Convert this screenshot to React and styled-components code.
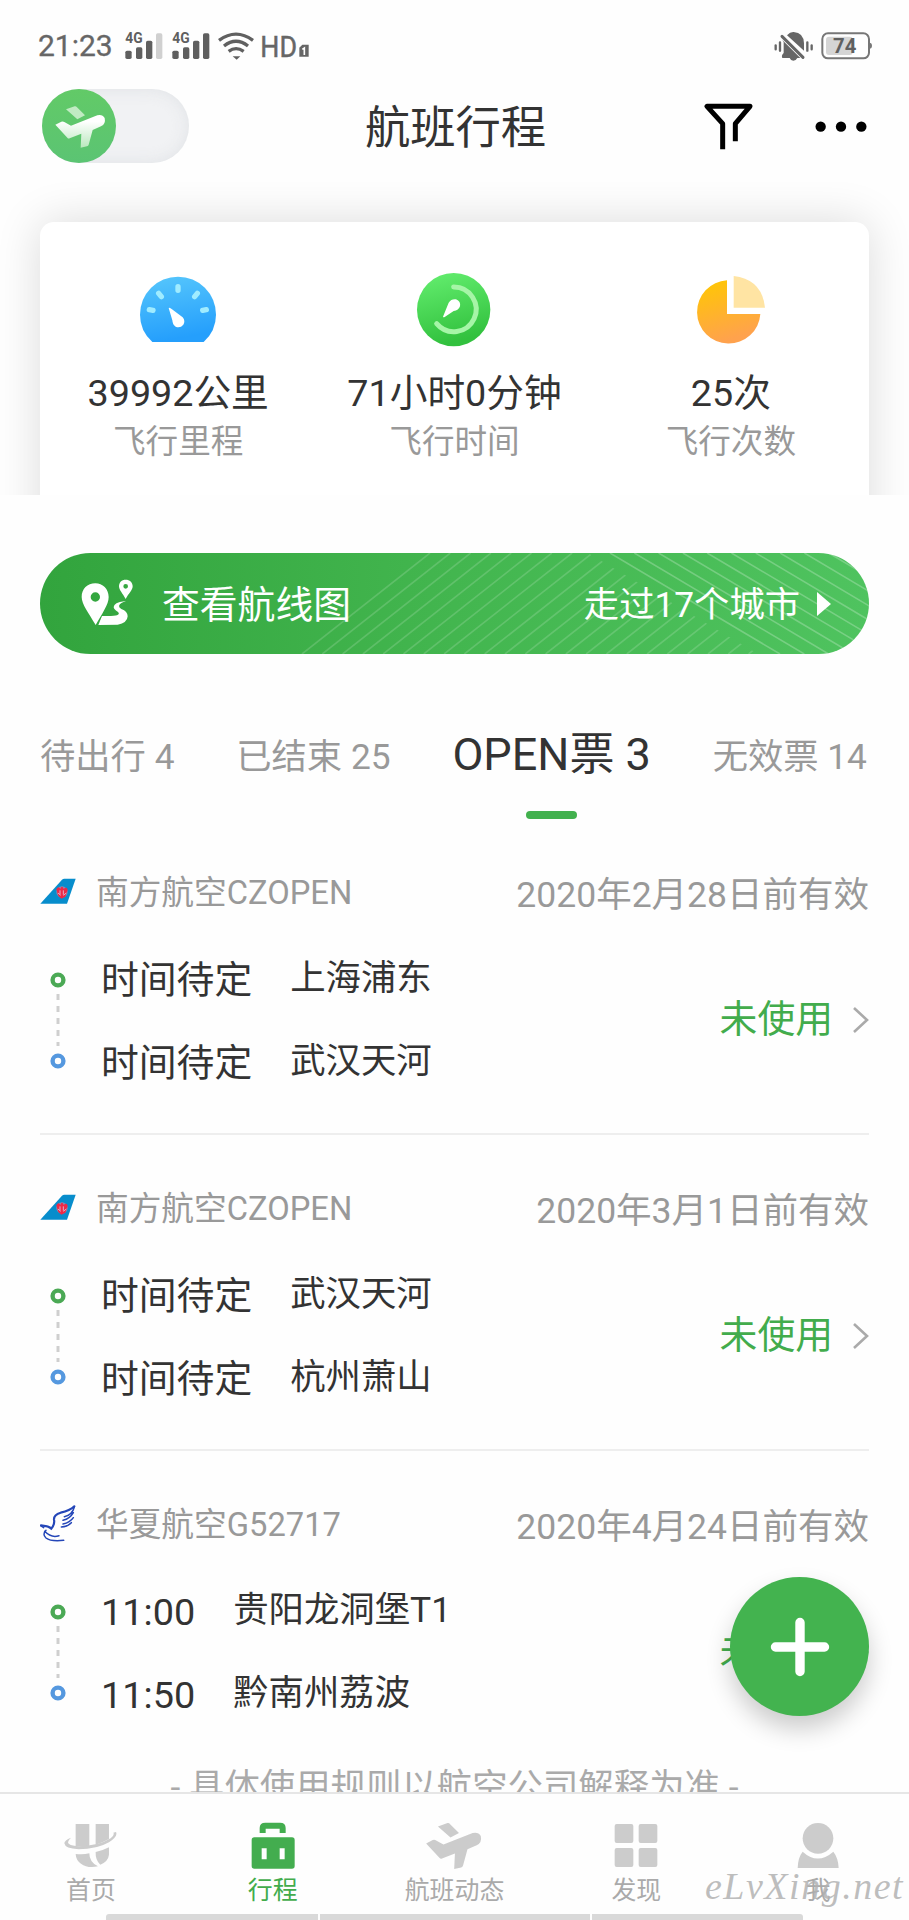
import React from "react";
import styled, { createGlobalStyle } from "styled-components";

const GlobalStyle = createGlobalStyle`
  * { box-sizing: border-box; }
  body { margin: 0; background: #fefefe; }
  svg { display: block; flex: none; }
`;

const Screen = styled.div`
  position: relative;
  width: 909px;
  height: 1920px;
  overflow: hidden;
  display: flex;
  flex-direction: column;
  background: #fefefe;
  color: #333;
  font-family: Roboto, "Noto Sans CJK SC", sans-serif;
  white-space: nowrap;
`;

const StatusBar = styled.div`
  height: 89px;
  padding: 2px 37px 0 38px;
  display: flex;
  align-items: center;
  color: #666;
`;
const Clock = styled.span`
  width: 87px;
  font-size: 30px;
  line-height: 40px;
  -webkit-text-stroke: 0.3px #666;
`;
const Spacer = styled.div`
  flex: 1;
`;
const StatusIcon = styled.svg`
  margin-left: ${(p) => p.$gap || 0}px;
  overflow: visible;
`;

const Header = styled.header`
  height: 93px;
  padding: 0 40px 0 42px;
  display: grid;
  grid-template-columns: 1fr auto 1fr;
  align-items: start;
`;
const Toggle = styled.div`
  width: 147px;
  height: 74px;
  border-radius: 37px;
  background: #f1f2f4;
  box-shadow: inset 0 0 16px rgba(215, 218, 222, 0.65);
`;
const ToggleKnob = styled.div`
  width: 74px;
  height: 74px;
  border-radius: 50%;
  background: linear-gradient(#62ca67, #5bc473);
  padding: 16px 0 0 12px;
`;
const Title = styled.h1`
  margin: 0;
  padding-top: 2px;
  font-size: 45.3px;
  font-weight: 400;
  line-height: 76px;
`;
const HeaderActions = styled.div`
  display: flex;
  justify-content: flex-end;
  align-items: flex-start;
  padding: 14px 2px 0 0;
  gap: 62px;
`;

const Content = styled.main`
  flex: 1;
  min-height: 0;
  overflow: hidden;
`;
const StatsClip = styled.section`
  height: 313px;
  padding: 40px 40px 0;
  overflow: hidden;
`;
const StatsCard = styled.div`
  height: 330px;
  border-radius: 14px;
  background: #fff;
  box-shadow: 0 0 46px rgba(0, 0, 0, 0.14);
  display: grid;
  grid-template-columns: repeat(3, 1fr);
`;
const Stat = styled.div`
  display: flex;
  flex-direction: column;
  align-items: center;
  padding-top: 50px;
`;
const StatValue = styled.div`
  margin-top: 18px;
  font-size: 37.7px;
  line-height: 54px;
`;
const StatLabel = styled.div`
  font-size: 32.6px;
  line-height: 45px;
  color: #999;
`;

const RouteBanner = styled.div`
  position: relative;
  height: 101px;
  margin: 58px 40px 0;
  padding: 0 38px 2px 41px;
  border-radius: 51px;
  overflow: hidden;
  display: flex;
  align-items: center;
  color: #fff;
  background: linear-gradient(90deg, #32a43d, #43b64f 50%, #4fc35f);
`;
const BannerPattern = styled.svg`
  position: absolute;
  inset: 0;
`;
const BannerTitle = styled.span`
  position: relative;
  flex: 1;
  margin-left: 28px;
  padding-top: 4px;
  font-size: 37.8px;
  line-height: 50px;
`;
const BannerMeta = styled.span`
  position: relative;
  padding-top: 4px;
  font-size: 35.3px;
  line-height: 50px;
`;
const Caret = styled.i`
  position: relative;
  margin: 3px 0 0 17px;
  border-left: 14px solid #fff;
  border-top: 12px solid transparent;
  border-bottom: 12px solid transparent;
`;

const Tabs = styled.nav`
  height: 165px;
  padding: 72px 42px 0 40px;
  display: flex;
  justify-content: space-between;
`;
const Tab = styled.div`
  display: flex;
  flex-direction: column;
  align-items: center;
  font-size: ${(p) => (p.$active ? 45 : 35.3)}px;
  line-height: ${(p) => (p.$active ? 57 : 62)}px;
  color: ${(p) => (p.$active ? "#333" : "#999")};
`;
const TabLine = styled.i`
  width: 51px;
  height: 8px;
  margin-top: 28px;
  border-radius: 4px;
  background: #42b14e;
`;

const Trip = styled.article`
  height: 316px;
  margin: 0 40px;
  padding-top: 49px;
  border-bottom: ${(p) => (p.$last ? "none" : "2px solid #eee")};
`;
const TripHead = styled.div`
  height: 52px;
  display: flex;
  align-items: center;
  color: #999;
`;
const LogoBox = styled.div`
  padding-bottom: 5px;
`;
const Airline = styled.span`
  flex: 1;
  margin-left: 19px;
  font-size: 32.7px;
  line-height: 50px;
  padding-bottom: 2px;
`;
const Validity = styled.span`
  font-size: 35.5px;
  line-height: 50px;
  padding-top: 2px;
`;
const TripBody = styled.div`
  display: flex;
  padding-top: 18px;
`;
const Legs = styled.div`
  flex: 1;
  margin-left: 35px;
`;
const Leg = styled.div`
  height: 83px;
  display: flex;
  gap: 38px;
  line-height: 84px;
`;
const LegTime = styled.span`
  font-size: 37.8px;
`;
const LegPlace = styled.span`
  font-size: 35.4px;
  line-height: 81px;
`;
const TripStatus = styled.div`
  height: 164px;
  display: flex;
  align-items: center;
  gap: 19px;
  font-size: 37.8px;
  color: #42ac4c;
`;
const StatusText = styled.span`
  line-height: 50px;
  padding-bottom: 2px;
`;
const Rule = styled.p`
  margin: -10px 0 0;
  font-size: 35.4px;
  line-height: 60px;
  text-align: center;
  color: #aaa;
`;

const AddButton = styled.button`
  position: absolute;
  left: 730px;
  top: 1577px;
  width: 139px;
  height: 139px;
  padding: 0;
  border: 0;
  border-radius: 50%;
  display: grid;
  place-items: center;
  background: #43b34f;
  box-shadow: 0 13px 24px rgba(0, 0, 0, 0.2);
`;

const NavBar = styled.nav`
  height: 122px;
  flex: none;
  border-top: 2px solid #e6e6e6;
  display: grid;
  grid-template-columns: repeat(5, 1fr);
  background: #fefefe;
`;
const NavItem = styled.div`
  display: flex;
  flex-direction: column;
  align-items: center;
  padding-top: 28px;
  color: ${(p) => (p.$active ? "#42ac4c" : "#aaa")};
  font-size: 24.9px;
  line-height: 44px;
`;
const NavIcon = styled.div`
  height: 47px;
`;
const HomeIndicator = styled.div`
  height: 6px;
  width: 697px;
  margin-left: 106px;
  flex: none;
  display: grid;
  grid-template-columns: 212px 270px 211px;
  gap: 2px;
  border-radius: 3px 3px 0 0;
  overflow: hidden;
`;
const IndicatorPart = styled.i`
  background: #d9d9d9;
`;
const Watermark = styled.div`
  position: absolute;
  left: 705px;
  top: 1861px;
  font: italic 38px/50px "Liberation Serif", serif;
  letter-spacing: 1.5px;
  color: rgba(178, 178, 178, 0.85);
`;

const Signal = ({ weak, gap }) => (
  <StatusIcon $gap={gap} width="38" height="28" viewBox="374 94 114 84" fill="#5f5f5f">
    <text x="375" y="128" fontSize="42" fontWeight="700" textLength="52" lengthAdjust="spacingAndGlyphs">4G</text>
    <rect x="375" y="150" width="19" height="25" rx="5" />
    <rect x="407" y="140" width="19" height="35" rx="5" />
    <rect x="437" y="120" width="19" height="55" rx="5" />
    <rect x="467" y="98" width="19" height="77" rx="5" fill={weak ? "#d0d0d0" : "#5f5f5f"} />
  </StatusIcon>
);

const Wifi = () => (
  <StatusIcon $gap={8} width="36" height="28" viewBox="653 94 108 84" fill="none" stroke="#606060" strokeWidth="10">
    <path d="M656 119Q707 82 758 119" />
    <path d="M671 136Q707 108 743 136" />
    <path d="M685 152Q707 136 730 152" />
    <path d="M697 167h23l-11 10z" fill="#606060" stroke="none" />
  </StatusIcon>
);

const HdMark = () => (
  <StatusIcon $gap={7} width="49" height="28" viewBox="782 94 147 84">
    <text x="780" y="168" fontSize="89" fill="#666" stroke="#666" strokeWidth="1.5" textLength="110" lengthAdjust="spacingAndGlyphs">HD</text>
    <path d="M897 141l9-9h19v36h-28z" fill="#666" />
    <path d="M906 146l6-4v21" stroke="#fff" strokeWidth="5" fill="none" />
  </StatusIcon>
);

const MutedBell = () => (
  <StatusIcon width="40" height="30" viewBox="958 91 120 90" fill="#666">
    <path d="M997 104Q1007 93 1017 94Q1047 96 1048 128V150Z" />
    <path d="M983 118L1037 172H1028Q1024 180 1016 180Q1008 180 1005 172H983Q979 165 987 157V125Z" />
    <path d="M982 107L1045 170" stroke="#666" strokeWidth="9" strokeLinecap="round" />
    <g stroke="#666" strokeWidth="7" strokeLinecap="round">
      <path d="M963 134v12M976 125v25M1058 125v25M1071 134v12" />
    </g>
  </StatusIcon>
);

const Battery = () => (
  <StatusIcon $gap={7} width="51" height="28" viewBox="1097 95 153 84">
    <rect x="1101" y="99" width="140" height="75" rx="17" fill="#fff" stroke="#777" strokeWidth="6" />
    <path d="M1242 127q8 0 8 9t-8 9z" fill="#777" />
    <rect x="1112" y="109" width="80" height="55" rx="9" fill="#d5d5d5" />
    <text x="1133" y="158" fontSize="59" fontWeight="700" fill="#606060" textLength="70" lengthAdjust="spacingAndGlyphs">74</text>
  </StatusIcon>
);

const PlaneShape = ({ fill, finFill }) => (
  <>
    <path d="M196 326L222 317Q226 316 229 320L253 344L230 356Z" fill={finFill} />
    <path d="M164 372L182 363Q187 361 191 364L211 375L290 344Q305 340 312 352Q316 370 301 377L276 388L264 432Q263 436 259 437L240 441L242 399L207 413Q203 415 200 411Z" fill={fill} />
  </>
);

const TogglePlane = () => (
  <svg width="52" height="44" viewBox="160 313 156 132">
    <defs>
      <linearGradient id="wing" x2="0" y2="1">
        <stop offset="0.2" stopColor="#fff" />
        <stop offset="1" stopColor="#b9e8bd" />
      </linearGradient>
    </defs>
    <PlaneShape fill="url(#wing)" finFill="#c1ebc3" />
  </svg>
);

const Filter = () => (
  <svg width="49" height="47" viewBox="751 308 147 141" fill="none" stroke="#000" strokeWidth="15">
    <path d="M807 447V370L760 318H889L845 370V423" strokeLinejoin="round" />
  </svg>
);
const More = () => (
  <svg width="52" height="47" viewBox="1081 308 156 141">
    <circle cx="1098" cy="379" r="15.5" />
    <circle cx="1159" cy="379" r="15.5" />
    <circle cx="1220" cy="379" r="15.5" />
  </svg>
);

const Gauge = () => (
  <svg width="78" height="76" viewBox="418 186 234 228">
    <defs>
      <linearGradient id="blue" x2="0.2" y2="1">
        <stop stopColor="#57c7fc" />
        <stop offset="1" stopColor="#259ffc" />
      </linearGradient>
    </defs>
    <path d="M458 396Q421 362 421 314A114 114 0 0 1 649 314Q649 362 612 396Z" fill="url(#blue)" />
    <g stroke="#a0ecff" strokeWidth="16" strokeLinecap="round">
      <path d="M535 230v11M477 250l8 10M593 250l-8 10M449 299l11 2M620 299l-11 2" />
    </g>
    <path d="M507 294Q510 291 517 298L549 322Q558 333 551 344Q542 355 528 350Q519 345 518 331Z" fill="#fff" />
  </svg>
);
const Timer = () => (
  <svg width="78" height="76" viewBox="1248 186 234 228">
    <defs>
      <linearGradient id="green" x2="0.25" y2="1">
        <stop stopColor="#65ef70" />
        <stop offset="1" stopColor="#32c13e" />
      </linearGradient>
    </defs>
    <circle cx="1364" cy="299" r="110" fill="url(#green)" />
    <path d="M1364 231A67 67 0 1 1 1313 341" fill="none" stroke="#a6f5a7" strokeWidth="15" strokeLinecap="round" />
    <path d="M1332 320L1349 278Q1357 266 1371 268Q1386 274 1383 289Q1379 301 1364 303L1337 321Q1333 323 1332 320Z" fill="#fff" />
  </svg>
);
const Pie = () => (
  <svg width="78" height="76" viewBox="712 186 234 228">
    <defs>
      <linearGradient id="amber" x2="0.3" y2="1">
        <stop stopColor="#ffc900" />
        <stop offset="1" stopColor="#ffa24d" />
      </linearGradient>
    </defs>
    <path d="M817 211A95 95 0 1 0 917 312H817Z" fill="url(#amber)" />
    <path d="M837 198Q922 208 931 293H837Z" fill="#ffe4a3" />
  </svg>
);

const RouteIcon = () => (
  <StatusIcon width="53" height="48" viewBox="244 150 159 144" fill="#fff">
    <path fillRule="evenodd" d="M287 163C263 163 246 180 246 204C246 226 267 252 288 288C308 252 327 227 327 204C327 180 309 163 287 163ZM287 190a14 14 0 1 1 0 28a14 14 0 1 1 0-28Z" />
    <path fillRule="evenodd" d="M378 152C366 152 358 160 358 172C358 183 369 193 378 210C387 193 399 184 399 172C399 160 390 152 378 152ZM378 165a7 7 0 1 1 0 14a7 7 0 1 1 0-14Z" />
    <path d="M374 217Q343 221 342 234Q342 241 354 248Q362 254 352 259Q344 262 307 261L296 288L354 287Q383 282 384 262Q384 247 365 240Q356 235 359 228Q362 222 379 217Z" />
  </StatusIcon>
);

const Pattern = () => (
  <BannerPattern width="829" height="101" viewBox="0 0 829 101" stroke="#fff" strokeWidth="1.6">
    <clipPath id="fan">
      <path d="M0 0H548L735 111H0Z" />
    </clipPath>
    <g clipPath="url(#fan)" strokeOpacity="0.16">
      {Array.from({ length: 24 }, (_, k) => (
        <path key={k} d={`M${262 + k * 20.3} 101l128-101`} />
      ))}
    </g>
    <g strokeOpacity="0.24">
      {Array.from({ length: 11 }, (_, k) => (
        <path key={k} d={`M${570 + k * 24.3} 0l170 101`} />
      ))}
    </g>
  </BannerPattern>
);

const SouthernLogo = () => (
  <svg width="37" height="37" viewBox="121 70 111 111">
    <path d="M122 162L187 90Q190 87 194 87H228L202 162Z" fill="#078dcc" />
    <circle cx="187" cy="127" r="17" fill="#9387ad" />
    <path d="M170 119q7-12 12-1q5-13 10 0q10-9 12 3l-7 20-12 6-9-8z" fill="#ef2846" />
    <path d="M181 122v13M191 122v13M175 130l8 7M200 130l-9 7" stroke="#dfafc5" strokeWidth="3" />
  </svg>
);
const ChinaExpressLogo = () => (
  <svg width="37" height="37" viewBox="121 74 111 111" fill="none" stroke="#2446b8" strokeLinecap="round">
    <path d="M124 135Q148 137 155 145Q166 131 163 118Q162 103 183 97Q211 91 224 78" strokeWidth="6.5" />
    <path d="M224 80Q218 104 194 109M221 97Q211 115 190 120M221 112Q211 127 190 131M215 127Q204 139 185 140M123 136L132 142M139 150Q127 162 139 173Q153 184 192 180M135 153Q155 174 178 166" strokeWidth="4.5" />
  </svg>
);

const Track = () => (
  <svg width="26" height="166" viewBox="-18 0 26 166" fill="none">
    <circle cy="42" r="5.4" stroke="#4ba955" strokeWidth="4.4" />
    <path d="M0 56V108" stroke="#cfcfcf" strokeWidth="3" strokeDasharray="6 6" />
    <circle cy="123" r="5.4" stroke="#5598df" strokeWidth="4.4" />
  </svg>
);
const Chevron = () => (
  <svg width="17" height="28" viewBox="0 0 17 28" fill="none" stroke="#aaa" strokeWidth="2.6">
    <path d="M2 2L15 14L2 26" />
  </svg>
);

const HomeIcon = () => (
  <svg width="53.3" height="47" viewBox="190 246 160 141" fill="#ccc">
    <path d="M225 252H266V318Q244 321 225 318Z" />
    <path d="M285 252H325V297Q307 308 285 314Z" />
    <path d="M211 293Q191 301 191 310Q193 326 234 328Q289 328 325 307Q353 288 346 276L338 278Q343 284 330 295Q293 318 235 319Q202 318 202 307Q203 300 211 293Z" />
    <path d="M225 342Q247 345 266 340Q266 367 292 379Q261 386 241 371Q226 361 225 342Z" />
    <path d="M285 336Q306 332 325 322V344Q323 364 299 374Q284 361 285 336Z" />
  </svg>
);
const CaseIcon = () => (
  <svg width="46" height="47" viewBox="748 244 138 141" fill="#43ad4f">
    <path d="M777 277V262Q777 246 794 246H838Q855 246 855 262V277H837V264H795V277Z" />
    <path fillRule="evenodd" d="M761 290H874Q882 290 882 298V376Q882 384 874 384H761Q753 384 753 376V298Q753 290 761 290ZM783 323V356H798V323ZM837 323V356H852V323Z" />
  </svg>
);
const FlightIcon = () => (
  <svg width="58" height="48" viewBox="162 314 155 130">
    <PlaneShape fill="#ccc" finFill="#ccc" />
  </svg>
);
const GridIcon = () => (
  <svg width="44" height="47" viewBox="478 246 132 141" fill="#ccc">
    <rect x="480" y="252" width="56" height="57" rx="6" />
    <rect x="552" y="252" width="56" height="57" rx="6" />
    <rect x="480" y="324" width="56" height="57" rx="6" />
    <rect x="552" y="324" width="56" height="57" rx="6" />
  </svg>
);
const PersonIcon = () => (
  <svg width="42" height="47" viewBox="1027 245 126 141" fill="#ccc">
    <circle cx="1090" cy="294" r="46" />
    <path d="M1029 383Q1030 351 1044 334Q1089 375 1136 334Q1151 353 1152 383Z" />
  </svg>
);

const stats = [
  { icon: Gauge, value: "39992公里", label: "飞行里程" },
  { icon: Timer, value: "71小时0分钟", label: "飞行时间" },
  { icon: Pie, value: "25次", label: "飞行次数" },
];
const tabs = ["待出行 4", "已结束 25", "OPEN票 3", "无效票 14"];
const trips = [
  { logo: SouthernLogo, airline: "南方航空CZOPEN", valid: "2020年2月28日前有效", legs: [["时间待定", "上海浦东"], ["时间待定", "武汉天河"]] },
  { logo: SouthernLogo, airline: "南方航空CZOPEN", valid: "2020年3月1日前有效", legs: [["时间待定", "武汉天河"], ["时间待定", "杭州萧山"]] },
  { logo: ChinaExpressLogo, airline: "华夏航空G52717", valid: "2020年4月24日前有效", legs: [["11:00", "贵阳龙洞堡T1"], ["11:50", "黔南州荔波"]] },
];
const navItems = [
  { icon: HomeIcon, label: "首页" },
  { icon: CaseIcon, label: "行程" },
  { icon: FlightIcon, label: "航班动态" },
  { icon: GridIcon, label: "发现" },
  { icon: PersonIcon, label: "我" },
];

export default function App() {
  return (
    <Screen>
      <GlobalStyle />
      <StatusBar>
        <Clock>21:23</Clock>
        <Signal weak />
        <Signal gap={9} />
        <Wifi />
        <HdMark />
        <Spacer />
        <MutedBell />
        <Battery />
      </StatusBar>
      <Header>
        <Toggle>
          <ToggleKnob>
            <TogglePlane />
          </ToggleKnob>
        </Toggle>
        <Title>航班行程</Title>
        <HeaderActions>
          <Filter />
          <More />
        </HeaderActions>
      </Header>
      <Content>
        <StatsClip>
          <StatsCard>
            {stats.map(({ icon: Icon, value, label }) => (
              <Stat key={label}>
                <Icon />
                <StatValue>{value}</StatValue>
                <StatLabel>{label}</StatLabel>
              </Stat>
            ))}
          </StatsCard>
        </StatsClip>
        <RouteBanner>
          <Pattern />
          <RouteIcon />
          <BannerTitle>查看航线图</BannerTitle>
          <BannerMeta>走过17个城市</BannerMeta>
          <Caret />
        </RouteBanner>
        <Tabs>
          {tabs.map((label, i) => (
            <Tab key={label} $active={i === 2}>
              {label}
              {i === 2 && <TabLine />}
            </Tab>
          ))}
        </Tabs>
        {trips.map(({ logo: Logo, airline, valid, legs }, i) => (
          <Trip key={valid} $last={i === trips.length - 1}>
            <TripHead>
              <LogoBox>
                <Logo />
              </LogoBox>
              <Airline>{airline}</Airline>
              <Validity>{valid}</Validity>
            </TripHead>
            <TripBody>
              <Track />
              <Legs>
                {legs.map(([time, place], n) => (
                  <Leg key={n}>
                    <LegTime>{time}</LegTime>
                    <LegPlace>{place}</LegPlace>
                  </Leg>
                ))}
              </Legs>
              <TripStatus>
                <StatusText>未使用</StatusText>
                <Chevron />
              </TripStatus>
            </TripBody>
          </Trip>
        ))}
        <Rule>- 具体使用规则以航空公司解释为准 -</Rule>
      </Content>
      <NavBar>
        {navItems.map(({ icon: Icon, label }, i) => (
          <NavItem key={label} $active={i === 1}>
            <NavIcon>
              <Icon />
            </NavIcon>
            {label}
          </NavItem>
        ))}
      </NavBar>
      <HomeIndicator>
        <IndicatorPart />
        <IndicatorPart />
        <IndicatorPart />
      </HomeIndicator>
      <AddButton aria-label="添加">
        <svg width="60" height="60" viewBox="0 0 60 60" stroke="#fff" strokeWidth="9.4" strokeLinecap="round">
          <path d="M30 5.5V54.5M5.5 30H54.5" />
        </svg>
      </AddButton>
      <Watermark>eLvXing.net</Watermark>
    </Screen>
  );
}
